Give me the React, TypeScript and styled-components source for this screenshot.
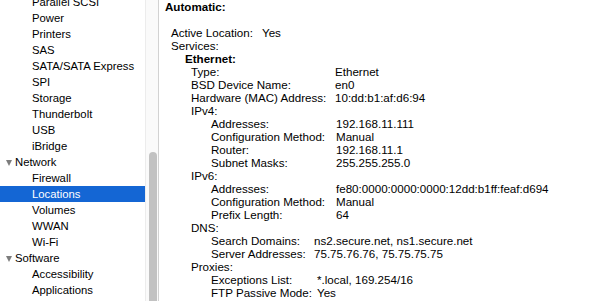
import styled, { createGlobalStyle } from 'styled-components';

const Global = createGlobalStyle`
  html, body { margin: 0; padding: 0; background: #fff; overflow: hidden; }
  body {
    font-family: "Liberation Sans", Arial, sans-serif;
    -webkit-font-smoothing: antialiased;
  }
`;

const Window = styled.div`
  display: flex;
  width: 594px;
  height: 301px;
  overflow: hidden;
  background: #fff;
  color: #000;
`;

const Sidebar = styled.nav`
  width: 145px;
  flex: none;
  overflow: hidden;
`;

const List = styled.ul`
  list-style: none;
  margin: -6px 0 0;
  padding: 0;
`;

const Item = styled.li<{ $selected?: boolean; $group?: boolean }>`
  height: 16px;
  line-height: 16px;
  font-size: 11.3px;
  white-space: nowrap;
  display: flex;
  align-items: center;
  padding-left: ${(p) => (p.$group ? '6px' : '32px')};
  background: ${(p) => (p.$selected ? '#1466d4' : 'transparent')};
  color: ${(p) => (p.$selected ? '#fff' : '#000')};
`;

const Disclosure = styled.span`
  width: 0;
  height: 0;
  margin-right: 3px;
  margin-top: 1px;
  border-left: 3.5px solid transparent;
  border-right: 3.5px solid transparent;
  border-top: 6px solid #7d7d7d;
`;

const Track = styled.div`
  width: 14px;
  flex: none;
  background: #fafafa;
  border-left: 1px solid #ececec;
  border-right: 1px solid #d2d2d2;
  padding-top: 152px;
  box-sizing: border-box;
  display: flex;
  justify-content: center;
`;

const Thumb = styled.div`
  width: 8px;
  height: 200px;
  margin-left: 1px;
  border-radius: 4px 4px 0 0;
  background: #c2c2c2;
`;

const Pane = styled.main`
  flex: 1;
  padding-left: 6px;
  font-size: 11.6px;
  line-height: 13px;
  white-space: nowrap;
  overflow: hidden;
`;

const Title = styled.div`
  font-weight: bold;
  height: 13px;
  margin-bottom: 13px;
`;

const Section = styled.div<{ $indent: number }>`
  padding-left: ${(p) => p.$indent}px;
`;

const Heading = styled.div<{ $bold?: boolean }>`
  height: 13px;
  font-weight: ${(p) => (p.$bold ? 'bold' : 'normal')};
`;

const Row = styled.div<{ $keyW: number }>`
  display: grid;
  grid-template-columns: ${(p) => p.$keyW}px auto;
  height: 13px;
`;

type KV = [string, string];

function Table({ rows, keyW }: { rows: KV[]; keyW: number }) {
  return (
    <>
      {rows.map(([k, v]) => (
        <Row key={k} $keyW={keyW}>
          <span>{k}</span>
          <span>{v}</span>
        </Row>
      ))}
    </>
  );
}

const sidebar: { label: string; group?: boolean; selected?: boolean }[] = [
  { label: 'Parallel SCSI' },
  { label: 'Power' },
  { label: 'Printers' },
  { label: 'SAS' },
  { label: 'SATA/SATA Express' },
  { label: 'SPI' },
  { label: 'Storage' },
  { label: 'Thunderbolt' },
  { label: 'USB' },
  { label: 'iBridge' },
  { label: 'Network', group: true },
  { label: 'Firewall' },
  { label: 'Locations', selected: true },
  { label: 'Volumes' },
  { label: 'WWAN' },
  { label: 'Wi-Fi' },
  { label: 'Software', group: true },
  { label: 'Accessibility' },
  { label: 'Applications' },
];

export default function App() {
  return (
    <>
      <Global />
      <Window>
        <Sidebar>
          <List>
            {sidebar.map((s) => (
              <Item key={s.label} $group={s.group} $selected={s.selected}>
                {s.group && <Disclosure />}
                {s.label}
              </Item>
            ))}
          </List>
        </Sidebar>
        <Track>
          <Thumb />
        </Track>
        <Pane>
          <Title>Automatic:</Title>
          <Section $indent={6}>
            <Table keyW={91} rows={[['Active Location:', 'Yes']]} />
            <Heading>Services:</Heading>
            <Section $indent={14}>
              <Heading $bold>Ethernet:</Heading>
              <Section $indent={6}>
                <Table
                  keyW={144}
                  rows={[
                    ['Type:', 'Ethernet'],
                    ['BSD Device Name:', 'en0'],
                    ['Hardware (MAC) Address:', '10:dd:b1:af:d6:94'],
                  ]}
                />
                <Heading>IPv4:</Heading>
                <Section $indent={20}>
                  <Table
                    keyW={125}
                    rows={[
                      ['Addresses:', '192.168.11.111'],
                      ['Configuration Method:', 'Manual'],
                      ['Router:', '192.168.11.1'],
                      ['Subnet Masks:', '255.255.255.0'],
                    ]}
                  />
                </Section>
                <Heading>IPv6:</Heading>
                <Section $indent={20}>
                  <Table
                    keyW={125}
                    rows={[
                      ['Addresses:', 'fe80:0000:0000:0000:12dd:b1ff:feaf:d694'],
                      ['Configuration Method:', 'Manual'],
                      ['Prefix Length:', '64'],
                    ]}
                  />
                </Section>
                <Heading>DNS:</Heading>
                <Section $indent={20}>
                  <Table
                    keyW={103}
                    rows={[
                      ['Search Domains:', 'ns2.secure.net, ns1.secure.net'],
                      ['Server Addresses:', '75.75.76.76, 75.75.75.75'],
                    ]}
                  />
                </Section>
                <Heading>Proxies:</Heading>
                <Section $indent={20}>
                  <Table
                    keyW={106}
                    rows={[
                      ['Exceptions List:', '*.local, 169.254/16'],
                      ['FTP Passive Mode:', 'Yes'],
                    ]}
                  />
                </Section>
              </Section>
              <Heading $bold>Wi-Fi:</Heading>
            </Section>
          </Section>
        </Pane>
      </Window>
    </>
  );
}
